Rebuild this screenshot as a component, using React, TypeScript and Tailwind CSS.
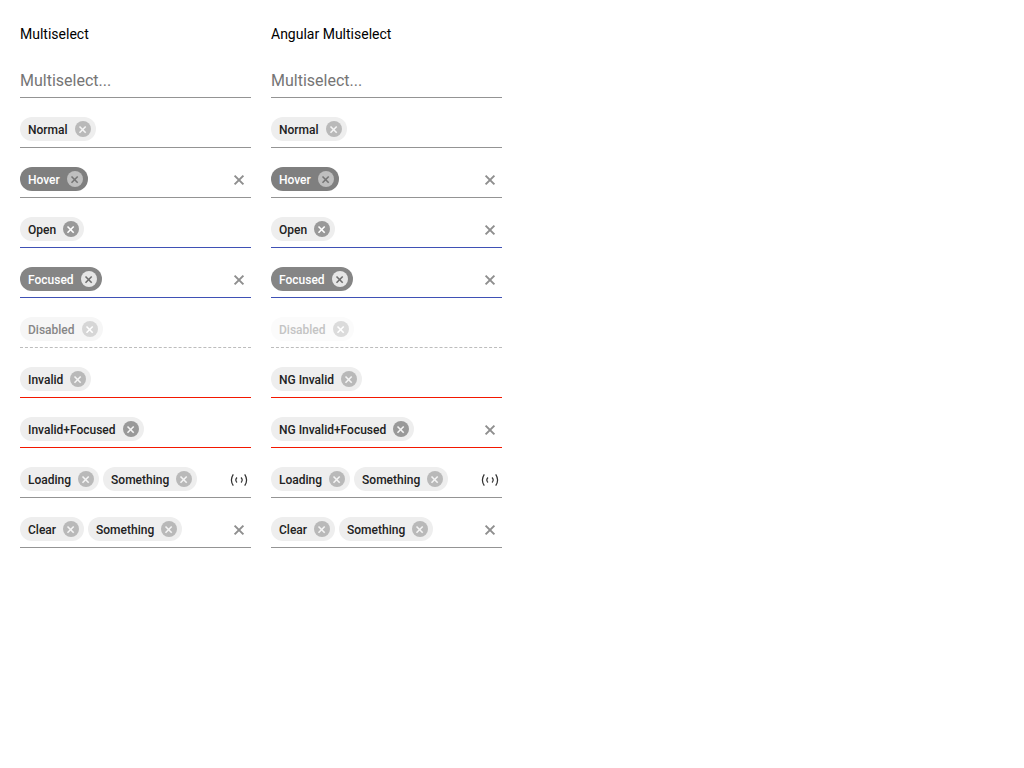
import React from "react";

type ChipTone = "normal" | "hover" | "open" | "focused" | "disabled" | "ngDisabled" | "active";
type LineTone = "idle" | "primary" | "invalid" | "disabled";

interface Row {
  chips: string[];
  tone?: ChipTone;
  line?: LineTone;
  trailing?: "clear" | "loading";
}

const chipTones: Record<ChipTone, string> = {
  normal: "bg-[#eeeeee] text-[#212121]",
  hover: "bg-[#7f7f7f] text-white",
  open: "bg-[#eeeeee] text-[#212121]",
  focused: "bg-[#858585] text-white",
  disabled: "bg-[#f6f6f6] text-[#868686]",
  ngDisabled: "bg-[#fbfbfb] text-[#c4c4c4]",
  active: "bg-[#eeeeee] text-[#212121]",
};

const dotTones: Record<ChipTone, string> = {
  normal: "bg-[#b9b9b9] text-[#f4f4f4]",
  hover: "bg-[#bfbfbf] text-[#757575]",
  open: "bg-[#999999] text-white",
  focused: "bg-[#e6e6e6] text-[#6e6e6e]",
  disabled: "bg-[#d6d6d6] text-white",
  ngDisabled: "bg-[#dbdbdb] text-white",
  active: "bg-[#999999] text-[#f4f4f4]",
};

const lineTones: Record<LineTone, string> = {
  idle: "border-solid border-[#949494]",
  primary: "border-solid border-[#3f51b5]",
  invalid: "border-solid border-[#f31700]",
  disabled: "border-dashed border-[#bdbdbd]",
};

function ClearIcon() {
  return (
    <svg viewBox="0 0 16 16" className="size-4" aria-hidden="true">
      <path d="M3.6 3.6 12.4 12.4M12.4 3.6 3.6 12.4" fill="none" stroke="currentColor" strokeWidth="2" />
    </svg>
  );
}

function RemoveIcon() {
  return (
    <svg viewBox="0 0 16 16" className="size-4" aria-hidden="true">
      <path d="M4.5 5.5 10.7 11.7M10.7 5.5 4.5 11.7" fill="none" stroke="currentColor" strokeWidth="1.6" />
    </svg>
  );
}

function Loader() {
  return (
    <svg viewBox="0 0 16 16" className="size-4 overflow-visible" role="img" aria-label="Loading">
      <g fill="none" stroke="#303030" strokeWidth="1.2">
        <path d="M2.3 2.3Q-1.5 8 2.3 13.7" />
        <path d="M13.7 2.3Q17.5 8 13.7 13.7" />
        <path d="M6 5.5Q3.6 8 6 10.5" />
        <path d="M10 5.5Q12.4 8 10 10.5" />
      </g>
    </svg>
  );
}

function Chip({ label, tone }: { label: string; tone: ChipTone }) {
  const disabled = tone === "disabled" || tone === "ngDisabled";
  return (
    <li className={`flex h-6 items-center gap-[7px] rounded-full pr-[5px] pl-2 text-xs font-medium whitespace-nowrap ${chipTones[tone]}`}>
      <span className="pt-0.5">{label}</span>
      <button
        type="button"
        disabled={disabled}
        aria-label={`Remove ${label}`}
        className={`flex size-4 items-center justify-center rounded-full ${dotTones[tone]}`}
      >
        <RemoveIcon />
      </button>
    </li>
  );
}

function Field({ chips, tone = "normal", line = "idle", trailing }: Row) {
  return (
    <div className={`flex h-[31px] items-start justify-between border-b ${lineTones[line]}`}>
      <ul className="flex gap-1">
        {chips.map((chip) => (
          <Chip key={chip} label={chip} tone={tone} />
        ))}
      </ul>
      <div className="flex h-[26px] w-6 items-center justify-center text-[#8f8f8f]">
        {trailing === "clear" && (
          <button type="button" aria-label="Clear selection">
            <ClearIcon />
          </button>
        )}
        {trailing === "loading" && <Loader />}
      </div>
    </div>
  );
}

function Column({ title, rows }: { title: string; rows: Row[] }) {
  return (
    <section>
      <h2 className="text-sm leading-5">{title}</h2>
      <input
        type="text"
        aria-label={title}
        placeholder="Multiselect..."
        className="mt-5 block h-[34px] w-full border-b border-[#949494] text-base text-[#212121] outline-none placeholder:text-[#757575]"
      />
      <div className="mt-[19px] flex flex-col gap-[19px]">
        {rows.map((row) => (
          <Field key={row.chips.join()} {...row} />
        ))}
      </div>
    </section>
  );
}

const plainRows: Row[] = [
  { chips: ["Normal"] },
  { chips: ["Hover"], tone: "hover", trailing: "clear" },
  { chips: ["Open"], tone: "open", line: "primary" },
  { chips: ["Focused"], tone: "focused", line: "primary", trailing: "clear" },
  { chips: ["Disabled"], tone: "disabled", line: "disabled" },
  { chips: ["Invalid"], line: "invalid" },
  { chips: ["Invalid+Focused"], tone: "active", line: "invalid" },
  { chips: ["Loading", "Something"], trailing: "loading" },
  { chips: ["Clear", "Something"], trailing: "clear" },
];

const angularRows: Row[] = [
  { chips: ["Normal"] },
  { chips: ["Hover"], tone: "hover", trailing: "clear" },
  { chips: ["Open"], tone: "open", line: "primary", trailing: "clear" },
  { chips: ["Focused"], tone: "focused", line: "primary", trailing: "clear" },
  { chips: ["Disabled"], tone: "ngDisabled", line: "disabled" },
  { chips: ["NG Invalid"], line: "invalid" },
  { chips: ["NG Invalid+Focused"], tone: "active", line: "invalid", trailing: "clear" },
  { chips: ["Loading", "Something"], trailing: "loading" },
  { chips: ["Clear", "Something"], trailing: "clear" },
];

export default function App() {
  return (
    <main className="grid grid-cols-[repeat(4,minmax(0,1fr))] gap-5 bg-white px-5 py-6 font-['Roboto',sans-serif] text-black">
      <Column title="Multiselect" rows={plainRows} />
      <Column title="Angular Multiselect" rows={angularRows} />
    </main>
  );
}
